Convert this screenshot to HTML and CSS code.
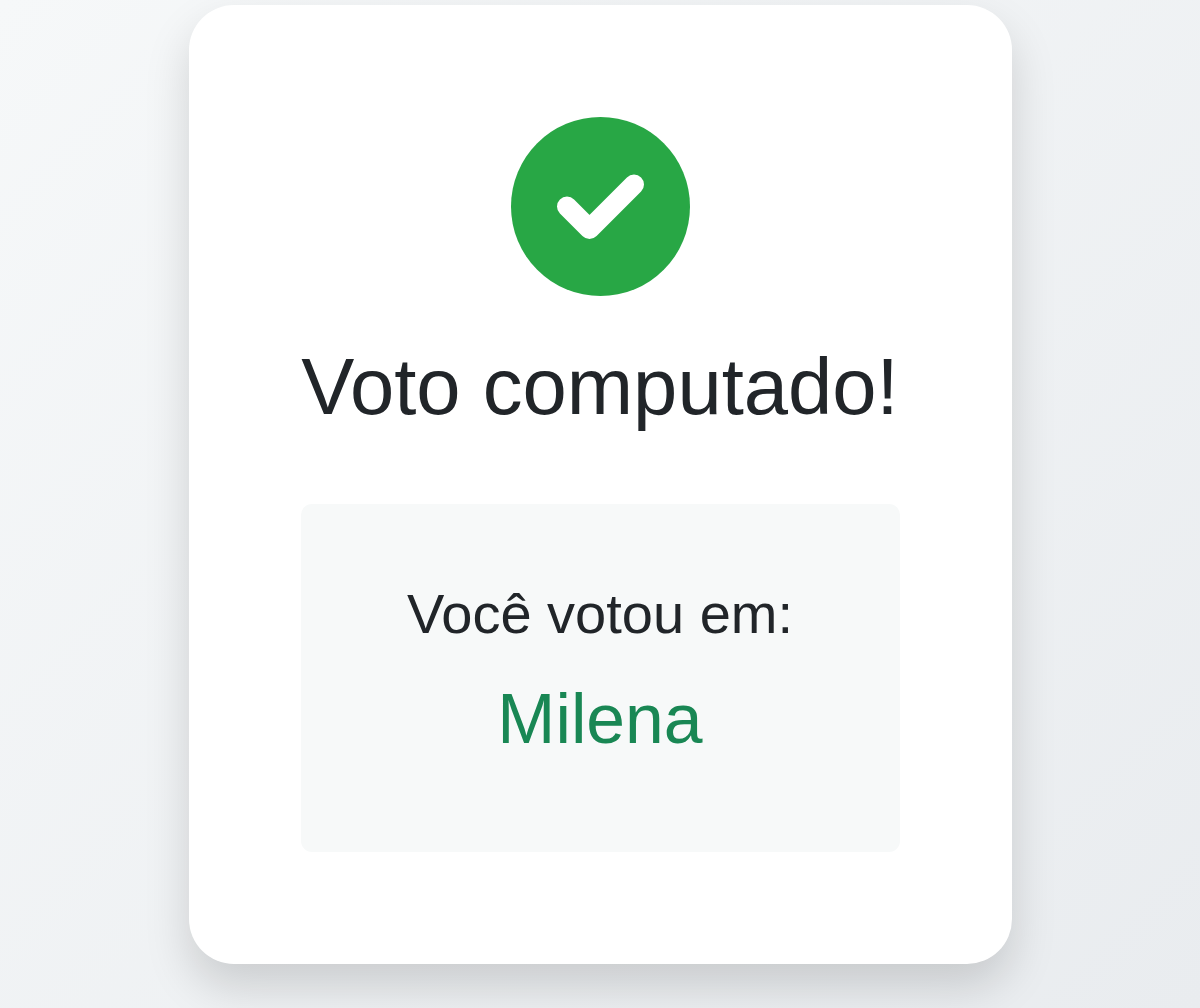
FILE: index.html
```
<!DOCTYPE html>
<html lang="pt-BR">
<head>
<meta charset="UTF-8" />
<meta name="viewport" content="width=device-width, initial-scale=1.0" />
<title>Voto computado</title>
<link rel="stylesheet" href="styles.css">
</head>
<body>
<main class="vote-card">
    <div class="success-icon">
        <svg viewBox="0 0 179 179" aria-hidden="true">
            <path d="M56 89.5 L78.5 112 L123 67.5" />
        </svg>
    </div>
    <h1>Voto computado!</h1>
    <div class="vote-info">
        <h2>Você votou em:</h2>
        <p class="candidate">Milena</p>
    </div>
</main>
</body>
</html>
```

FILE: styles.css
```
* {
    box-sizing: border-box;
}
body {
    font-family: "Liberation Sans", Arial, sans-serif;
    color: #212529;
    background: linear-gradient(135deg, #f6f8f9 0%, #e9ecef 100%);
    margin: 0;
    padding-top: 5px;
    height: 1008px;
    overflow: hidden;
}
.vote-card {
    width: 823px;
    height: 959px;
    margin: 0 auto;
    padding: 112px;
    background-color: #fff;
    border-radius: 45px;
    box-shadow: 0 22.4px 44.8px rgba(0, 0, 0, 0.15);
    text-align: center;
}
.success-icon {
    width: 179px;
    height: 179px;
    margin: 0 auto;
    border-radius: 50%;
    background-color: #28a745;
}
.success-icon svg {
    display: block;
}
.success-icon path {
    fill: none;
    stroke: #fff;
    stroke-width: 20;
    stroke-linecap: round;
    stroke-linejoin: round;
}
h1, h2, .candidate {
    margin: 0;
    font-weight: normal;
    line-height: 1.2;
    white-space: nowrap;
}
h1 {
    height: 96px;
    margin: 43px 0 69px;
    font-size: 79.6px;
}
.vote-info {
    height: 348px;
    padding: 76px 0;
    border-radius: 11px;
    background-color: #f7f9f9;
}
h2 {
    font-size: 56px;
}
.candidate {
    margin-top: 31px;
    font-size: 69.7px;
    color: #198754;
}
```
